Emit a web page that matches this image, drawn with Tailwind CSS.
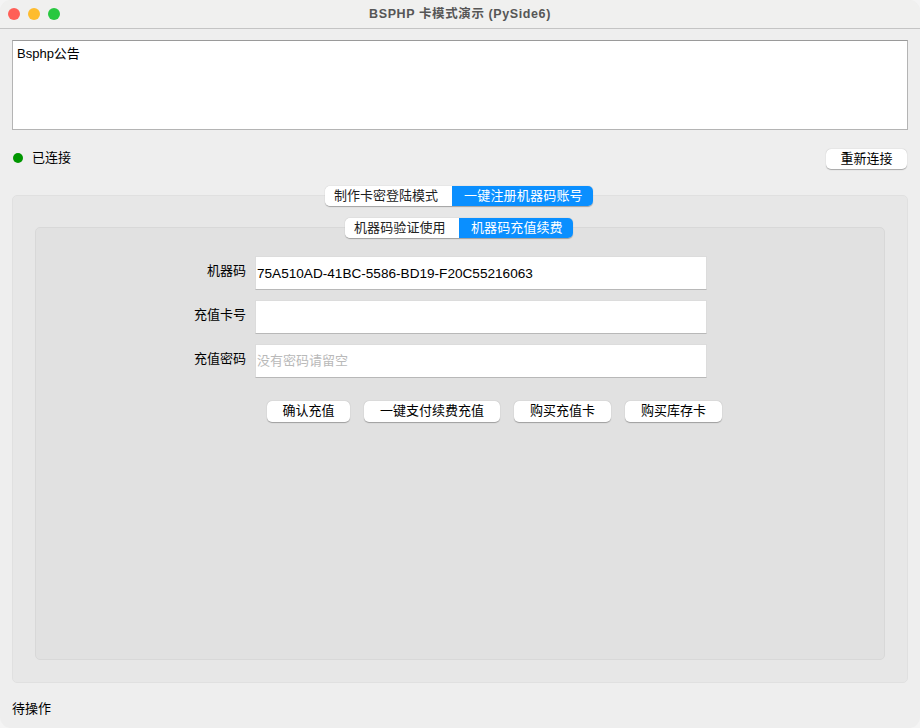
<!DOCTYPE html>
<html lang="zh">
<head>
<meta charset="utf-8">
<script src="https://cdn.jsdelivr.net/npm/@tailwindcss/browser@4"></script>
<title>BSPHP</title>
</head>
<body class="bg-[#f4f4f4] overflow-hidden">
<div class="w-[920px] h-[728px] flex flex-col bg-[#eeeeee] rounded-[11px] overflow-hidden text-[13px] leading-[18px] text-black font-['Liberation_Sans','Noto_Sans_CJK_SC',sans-serif]">
  <div class="relative h-[29px] shrink-0 flex items-center justify-center bg-[#f0f0ef] border-b border-[#c4c4c4]">
    <div class="absolute left-[8px] top-[8px] flex gap-[8px]">
      <span class="w-[12px] h-[12px] rounded-full bg-[#ff5f57]"></span>
      <span class="w-[12px] h-[12px] rounded-full bg-[#febc2e]"></span>
      <span class="w-[12px] h-[12px] rounded-full bg-[#28c840]"></span>
    </div>
    <span class="text-[12.5px] font-bold text-[#565656] tracking-[0.6px]">BSPHP 卡模式演示 (PySide6)</span>
  </div>
  <div class="flex-1 flex flex-col px-[12px]">
    <div class="mt-[11px] h-[90px] bg-white border border-[#b4b4b4] border-t-[#9a9a9a] px-[4px] py-[4px]">Bsphp公告</div>
    <div class="mt-[19px] h-[20px] flex items-center justify-between pr-[1px]">
      <div class="flex items-center gap-[9px] pl-[1px] pb-[2px]">
        <span class="w-[10px] h-[10px] rounded-full bg-[#009600]"></span>
        <span>已连接</span>
      </div>
      <button class="w-[81px] h-[20px] pb-[1px] bg-white rounded-[5px] shadow-[0_0.5px_1px_rgba(0,0,0,0.3)] text-center">重新连接</button>
    </div>
    <div class="mt-[26px] h-[488px] bg-[#e7e7e7] border border-[#e0e0e0] rounded-[5px] px-[22px] flex flex-col">
      <div class="-mt-[10px] h-[20px] shrink-0 flex justify-center pr-[2px]">
        <div class="flex rounded-[5px] shadow-[0_0.5px_1px_rgba(0,0,0,0.3)] overflow-hidden">
          <div class="w-[127px] pl-[9px] bg-white text-left text-[#222] leading-[20px]">制作卡密登陆模式</div>
          <div class="w-[141px] pl-[12px] bg-[#0a8fff] text-left text-white leading-[20px] tracking-[0.2px]">一键注册机器码账号</div>
        </div>
      </div>
      <div class="mt-[21px] h-[433px] bg-[#e1e1e1] border border-[#d8d8d8] rounded-[5px] flex flex-col">
        <div class="-mt-[10px] h-[20px] shrink-0 flex justify-center pr-[2px]">
          <div class="flex rounded-[5px] shadow-[0_0.5px_1px_rgba(0,0,0,0.3)] overflow-hidden">
            <div class="w-[114px] pl-[9px] bg-white text-left text-[#222] leading-[20px] tracking-[0.1px]">机器码验证使用</div>
            <div class="w-[114px] pl-[12px] bg-[#0a8fff] text-left text-white leading-[20px] tracking-[0.1px]">机器码充值续费</div>
          </div>
        </div>
        <div class="mt-[18px] flex flex-col gap-[10px] pl-[146px]">
          <div class="flex items-center gap-[9px]">
            <label class="w-[64px] text-right -mt-[5px]">机器码</label>
            <div class="w-[452px] h-[34px] bg-white border border-[#dcdcdc] border-b-[#b8b8b8] pl-[1px] pt-[1px] leading-[32px] text-[13.6px]">75A510AD-41BC-5586-BD19-F20C55216063</div>
          </div>
          <div class="flex items-center gap-[9px]">
            <label class="w-[64px] text-right -mt-[5px]">充值卡号</label>
            <div class="w-[452px] h-[34px] bg-white border border-[#dcdcdc] border-b-[#b8b8b8]"></div>
          </div>
          <div class="flex items-center gap-[9px]">
            <label class="w-[64px] text-right -mt-[5px]">充值密码</label>
            <div class="w-[452px] h-[34px] bg-white border border-[#dcdcdc] border-b-[#b8b8b8] pl-[1px] leading-[32px] text-[#b9b9b9]">没有密码请留空</div>
          </div>
        </div>
        <div class="mt-[23px] pl-[231px] flex gap-[14px]">
          <button class="w-[83px] h-[21px] pb-[1px] bg-white rounded-[5px] shadow-[0_0.5px_1px_rgba(0,0,0,0.3)]">确认充值</button>
          <button class="w-[136px] h-[21px] pb-[1px] bg-white rounded-[5px] shadow-[0_0.5px_1px_rgba(0,0,0,0.3)]">一键支付续费充值</button>
          <button class="w-[97px] h-[21px] pb-[1px] bg-white rounded-[5px] shadow-[0_0.5px_1px_rgba(0,0,0,0.3)]">购买充值卡</button>
          <button class="w-[97px] h-[21px] pb-[1px] bg-white rounded-[5px] shadow-[0_0.5px_1px_rgba(0,0,0,0.3)]">购买库存卡</button>
        </div>
      </div>
    </div>
    <div class="mt-[17px]">待操作</div>
  </div>
</div>
</body>
</html>
